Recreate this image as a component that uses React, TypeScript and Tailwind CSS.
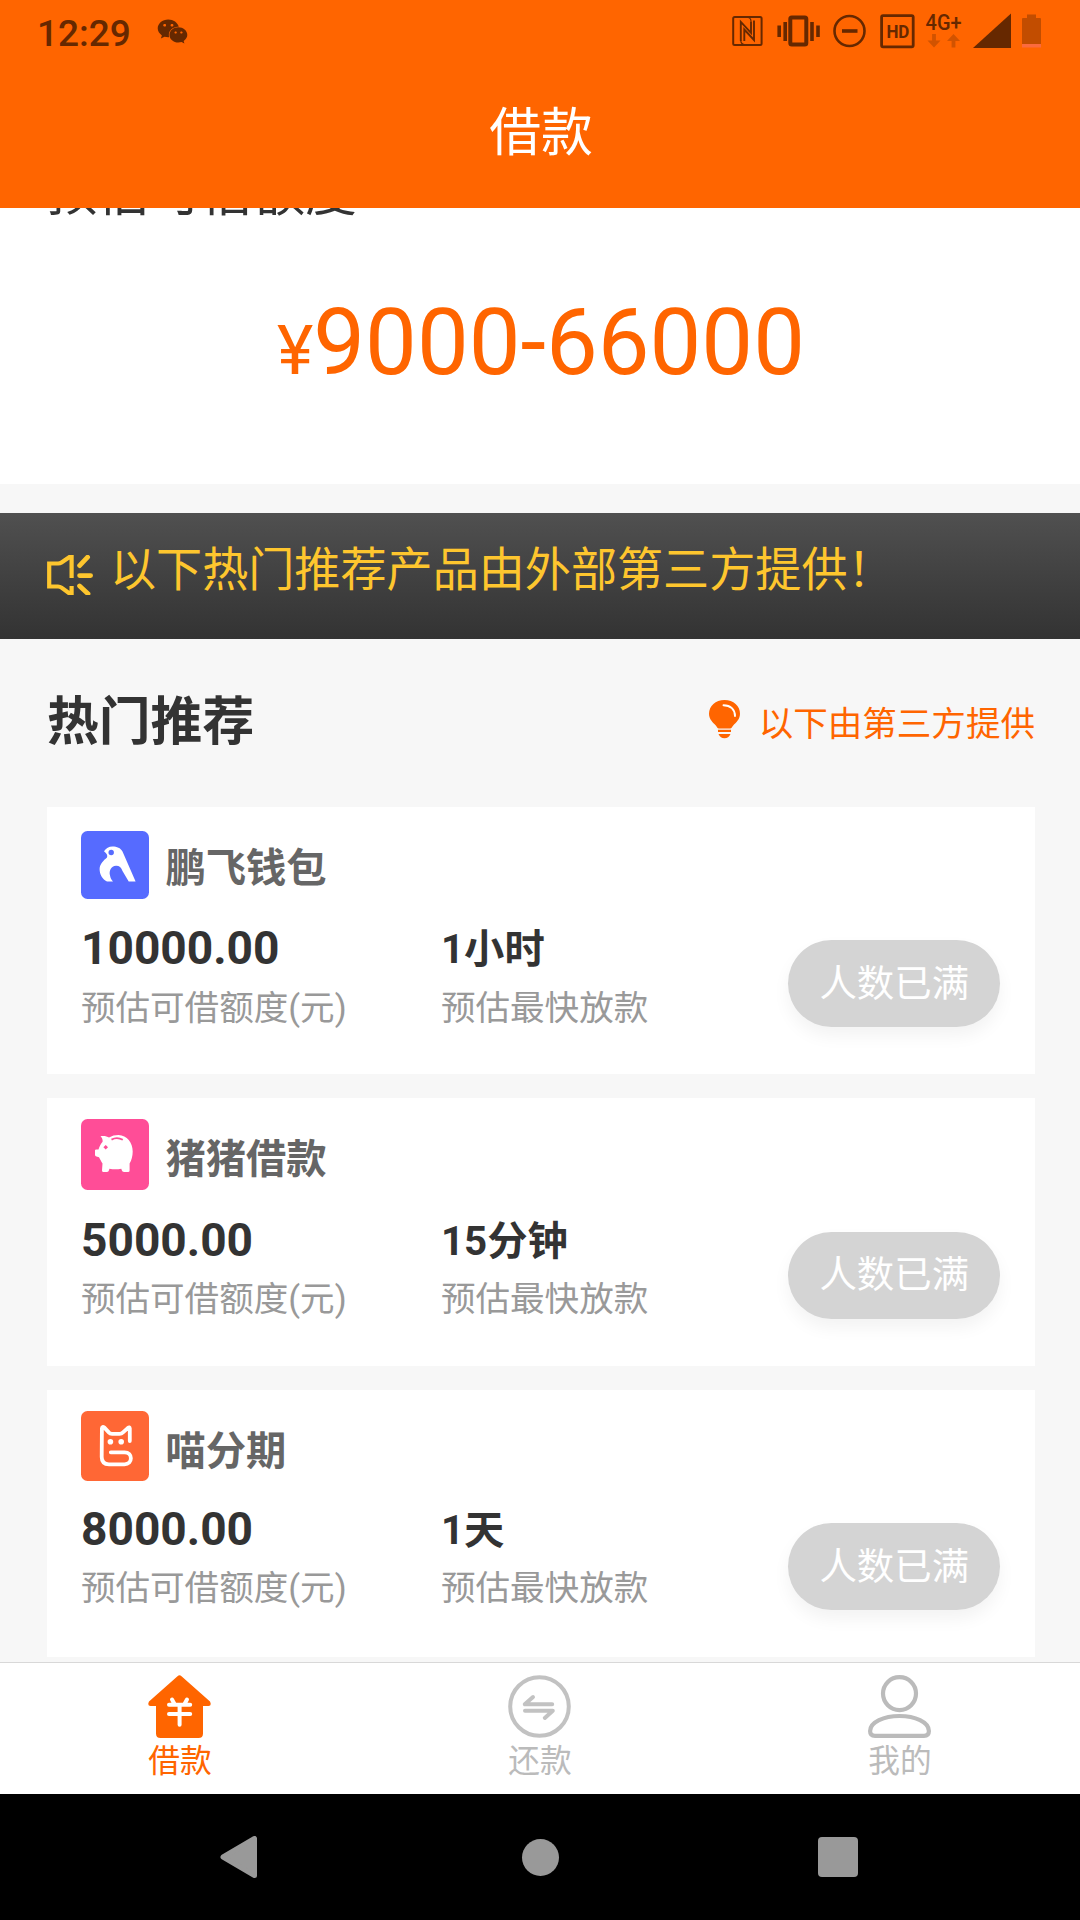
import type { ReactNode } from "react";
import { FaWeixin } from "react-icons/fa";

type Product = {
  name: string;
  amount: string;
  time: string;
  logo: ReactNode;
  /** Offsets of the logo row, the name beside it, the figures and their captions. */
  headClass: string;
  nameClass: string;
  bodyClass: string;
  captionClass: string;
};

function BirdLogo() {
  return (
    <svg viewBox="0 0 68 68" className="h-[68px] w-[68px] shrink-0">
      <rect width="68" height="68" rx="6.5" fill="#566bff" />
      <path
        d="M23 20.2C25 17 28 15.4 31.4 15.4C36 15.4 39.5 16.8 41.5 20.5L54.6 50.5H47.7L41.5 40C40.3 36.5 38 34.6 35 34.8C30 35.2 27.8 40 29 44.5C29.6 47.5 30.5 49 32 50.5H26C21 48 18.6 43 18.6 38C18.8 33 22.5 29.5 26 26.5C26.8 24.5 26 22.5 23 20.2Z"
        fill="#fff"
      />
      <circle cx="30.2" cy="21.5" r="2.7" fill="#566bff" />
    </svg>
  );
}

function PigLogo() {
  return (
    <svg viewBox="0 0 68 71" className="h-[71px] w-[68px] shrink-0">
      <rect width="68" height="71" rx="6.5" fill="#ff4d97" />
      <path
        d="M19.5 17.2C22.5 16.6 26 17 28 18.6C31 16.8 34 16 37.5 16C46 16.4 51.7 23.5 51.7 32.5C51.7 37 50.5 41.5 48.6 44.5V51.5Q48.6 53 47 53H43Q41.2 53 40.8 51.3L40.3 49.7Q34.5 50.8 28.4 49.7L28 51.3Q27.6 53 26 53H22.6Q21 53 21 51.5L21.5 44.5C20.2 42.5 19 40 18 38.3L15.5 37.6Q14 37.2 14 35.8V31.6Q14 30.6 15.2 30.6H17.5C18.3 27.5 19.6 25 21.6 22.7C21.8 20.6 21.2 18.6 19.5 17.2Z"
        fill="#fff"
      />
      <path d="M24.7 26L27 28.3L24.7 30.6L22.4 28.3Z" fill="#ff4d97" />
      <path d="M30.5 20.6Q36 17.6 41.8 20.8" fill="none" stroke="#ff4d97" strokeWidth="1.8" />
    </svg>
  );
}

function CatLogo() {
  return (
    <svg viewBox="0 0 68 70" className="h-[70px] w-[68px] shrink-0">
      <rect width="68" height="70" rx="6.5" fill="#ff6735" />
      <path
        d="M48.8 30V17.5Q48.6 15.6 47 16.8L42 21.4Q40.6 22.8 38.5 22.8H31Q29 22.8 27.8 21.4L23.4 16.6Q21.2 15 20.9 17.5L20.7 46Q20.8 53.3 28 53.3H43.5C52 53.3 52 41.3 43.5 41.3H29.8"
        fill="none"
        stroke="#fff"
        strokeWidth="3.8"
        strokeLinecap="round"
        strokeLinejoin="round"
      />
      <circle cx="29.4" cy="30.8" r="2.8" fill="#fff" />
      <circle cx="40.2" cy="30.8" r="2.8" fill="#fff" />
    </svg>
  );
}

const PRODUCTS: Product[] = [
  {
    name: "鹏飞钱包",
    amount: "10000.00",
    time: "1小时",
    logo: <BirdLogo />,
    headClass: "pt-[24px]",
    nameClass: "mt-[9px]",
    bodyClass: "pt-[112px]",
    captionClass: "mt-[7px]",
  },
  {
    name: "猪猪借款",
    amount: "5000.00",
    time: "15分钟",
    logo: <PigLogo />,
    headClass: "pt-[21px]",
    nameClass: "mt-[11px]",
    bodyClass: "pt-[113px]",
    captionClass: "mt-[6px]",
  },
  {
    name: "喵分期",
    amount: "8000.00",
    time: "1天",
    logo: <CatLogo />,
    headClass: "pt-[21px]",
    nameClass: "mt-[12px]",
    bodyClass: "pt-[110px]",
    captionClass: "mt-[6px]",
  },
];

function StatusBar() {
  return (
    <div className="flex h-[62px] items-start justify-between pl-[37px] pr-[39px] text-[#662800]">
      <div className="flex items-start">
        <span className="mt-[12px] w-[120px] text-[37px] font-medium leading-[44px]">12:29</span>
        <FaWeixin className="mt-[16px] h-[31px] w-[31px]" />
      </div>
      <svg viewBox="0 0 309 36" className="mt-[13px] h-[36px] w-[309px]" fill="none" stroke="currentColor">
        <rect x="1.2" y="4" width="28.4" height="28" rx="1.5" strokeWidth="2" />
        <path
          d="M8.8 28V8.8L19 19.8V8.5M22 7.5V27L12.3 16.5V28"
          strokeWidth="1.9"
        />
        <path d="M16 4.5Q19 5 19 8.5M12.3 31.5Q8.8 31 8.8 27.5" strokeWidth="1.2" />
        <rect x="58.3" y="4.5" width="16" height="27" rx="1.5" strokeWidth="4" />
        <path d="M47.2 12.5V24M53.2 9V28M80 9V28M86 12.5V24" strokeWidth="3.6" />
        <circle cx="117.5" cy="18" r="15" strokeWidth="2.6" />
        <path d="M110 18H125.5" strokeWidth="3.6" />
        <rect x="149.6" y="2.6" width="31.6" height="31.2" rx="1.5" strokeWidth="2.8" />
        <text
          x="154.4"
          y="25.4"
          fontSize="19"
          fontWeight="700"
          textLength="23"
          lengthAdjust="spacingAndGlyphs"
          fill="currentColor"
          stroke="none"
        >
          HD
        </text>
        <text
          x="193.6"
          y="16.6"
          fontSize="22.5"
          fontWeight="500"
          textLength="36"
          lengthAdjust="spacingAndGlyphs"
          fill="currentColor"
          stroke="none"
        >
          4G+
        </text>
        <path
          d="M200.1 21H203.9V27.5H208.5L202 34.5L195.5 27.5H200.1ZM219.6 34.5H223.4V28H228L221.5 21L215 28H219.6Z"
          fill="#d15300"
          stroke="none"
        />
        <path d="M241 35L279 .5V35Z" fill="currentColor" stroke="none" />
        <path d="M290 6Q290 5 291 5H295V1.5H304V5H308Q309 5 309 6V31H290Z" fill="#c24d00" stroke="none" />
        <rect x="290" y="31" width="19" height="3.5" fill="#fc6a3d" stroke="none" />
      </svg>
    </div>
  );
}

function ProductCard({ product }: { product: Product }) {
  const caption = `text-[34.56px] leading-[48px] text-[#999] ${product.captionClass}`;

  return (
    <div className="relative h-[267.5px] shrink-0 bg-white">
      <div className={`absolute left-[34.2px] top-0 flex items-center ${product.headClass}`}>
        {product.logo}
        <h3 className={`ml-4 text-[40.3px] font-bold leading-[48px] text-[#666] ${product.nameClass}`}>
          {product.name}
        </h3>
      </div>
      <div className={`flex px-[33.7px] ${product.bodyClass}`}>
        <div className="w-[360px]">
          <div className="text-[46.1px] font-bold leading-[58px] text-[#333]">{product.amount}</div>
          <div className={caption}>预估可借额度(元)</div>
        </div>
        <div className="flex-1">
          <div className="h-[58px] text-[40.3px] font-bold leading-[62px] text-[#333]">{product.time}</div>
          <div className={caption}>预估最快放款</div>
        </div>
      </div>
      <button
        type="button"
        className="absolute right-[34.5px] top-[133.5px] h-[87px] w-[212.5px] rounded-full bg-[#d4d4d4] pl-px text-[37.4px] leading-[86px] text-white shadow-[0_9px_17px_rgba(0,0,0,0.05)]"
      >
        人数已满
      </button>
    </div>
  );
}

function TabBar() {
  return (
    <div className="grid h-[132px] shrink-0 grid-cols-3 border-t border-[#d8d8d8] bg-white text-[31.7px] leading-[44px] text-[#bbb]">
      <div className="flex flex-col items-center pt-3 text-[#ff6500]">
        <svg viewBox="0 0 63 63" className="mr-px h-[63px] w-[63px]">
          <path
            d="M29.5 1.2Q31.5 -.6 33.5 1.2L62 26.5Q64 30.7 60.5 31H55V58.5Q55 63 50.5 63H12.5Q8 63 8 58.5V31H2.5Q-1 30.7 1 26.5Z"
            fill="currentColor"
          />
          <path
            d="M24 24.5L26.5 29M39 24.5L36.5 29M21 29.7H42.2M21 39H42.2M31.6 29.7V49.7"
            fill="none"
            stroke="#fff"
            strokeWidth="4"
            strokeLinecap="round"
          />
        </svg>
        <span className="mt-[2px]">借款</span>
      </div>
      <div className="flex flex-col items-center pt-3">
        <svg viewBox="0 0 63 63" className="mr-px h-[63px] w-[63px]" fill="none" stroke="#c2c2c2" strokeWidth="4">
          <circle cx="31.5" cy="31.5" r="29.3" />
          <path
            d="M25 22L16.8 29.3H44.2M17 35.8H44.8L36.8 43"
            strokeLinecap="round"
            strokeLinejoin="round"
          />
        </svg>
        <span className="mt-[2px]">还款</span>
      </div>
      <div className="flex flex-col items-center pt-3">
        <svg viewBox="0 0 63 63" className="mr-px h-[63px] w-[63px]" fill="none" stroke="currentColor" strokeWidth="4.2">
          <circle cx="31.5" cy="18.6" r="16.5" />
          <path d="M2.1 56C2.1 47 16 41 31.5 41S60.9 47 60.9 56Q60.9 60.9 56 60.9H7Q2.1 60.9 2.1 56Z" />
        </svg>
        <span className="mt-[2px]">我的</span>
      </div>
    </div>
  );
}

function NavBar() {
  return (
    <div className="flex h-[126px] shrink-0 items-center justify-between bg-black pl-[220px] pr-[222px]">
      <svg viewBox="0 0 37 42" className="h-[42px] w-[37px]">
        <path d="M3 21L34.5 2.5V39.5Z" fill="#999" stroke="#999" strokeWidth="5" strokeLinejoin="round" />
      </svg>
      <div className="ml-[5px] h-[37px] w-[37px] rounded-full bg-[#999]" />
      <div className="h-[40px] w-[40px] rounded-[4px] bg-[#999]" />
    </div>
  );
}

export default function App() {
  return (
    <div className="flex h-[1920px] w-[1080px] flex-col overflow-hidden bg-[#f7f7f7] font-['Roboto','Noto_Sans_CJK_SC',sans-serif]">
      <header className="h-[208px] shrink-0 bg-[#ff6500]">
        <StatusBar />
        <h1 className="mt-[34px] pl-[2px] text-center text-[51.8px] leading-[76px] text-white">借款</h1>
      </header>

      <main className="flex h-[1454px] shrink-0 flex-col overflow-hidden">
        {/* quota panel, scrolled partly under the header */}
        <section className="-mt-[60px] h-[336px] shrink-0 bg-white [clip-path:inset(60px_0_0_0)]">
          <h2 className="pl-[46px] pt-[8px] text-[51.8px] leading-[76px] text-[#333]">预估可借额度</h2>
          <div className="mt-[56px] pl-[2px] text-center leading-[110px] text-[#ff6500]">
            <span className="text-[69px]">¥</span>
            <span className="text-[92.16px]">9000-66000</span>
          </div>
        </section>

        <section className="mt-[29px] flex h-[125.5px] shrink-0 items-center bg-linear-to-b from-[#505050] to-[#333] pl-[47px] text-[#fec62e]">
          <svg viewBox="0 0 46 40" className="mb-[2px] h-[40px] w-[46px]" fill="none" stroke="currentColor">
            <path d="M24.6 23V2H22.5L14.5 7.5Q13 8.5 11 8.5H2.2V31.5H11Q13 31.5 14.5 32.6L22.5 38.5H24.6V31" strokeWidth="4.2" />
            <path d="M32.6 10.6L40.6 2.2M32.6 20.6H43.6M32.6 31L41 38.8" strokeWidth="4.8" strokeLinecap="round" />
          </svg>
          <p className="mb-[12px] ml-[17px] whitespace-nowrap text-[46.1px] leading-[60px]">
            以下热门推荐产品由外部第三方提供！
          </p>
        </section>

        <section className="flex h-[168px] shrink-0 items-start justify-between pl-[47px] pr-[45px]">
          <h2 className="mt-[46.5px] text-[51.8px] font-bold leading-[76px] text-[#333]">热门推荐</h2>
          <div className="flex items-start text-[#ff6500]">
            <svg viewBox="0 0 31 39" className="mt-[61px] h-[39px] w-[31px]">
              <path
                d="M15.5 0C24.5 0 31 6 31 13.8C31 19.5 27 22.5 24.2 25.5C23 27 22.8 28.4 21 28.4H10C8.2 28.4 8 27 6.8 25.5C4 22.5 0 19.5 0 13.8C0 6 6.5 0 15.5 0Z"
                fill="currentColor"
              />
              <path d="M14.5 5.2C21.5 5.2 26 9.5 26 16" fill="none" stroke="#fff" strokeWidth="1.9" strokeLinecap="round" />
              <path d="M9 29.8H22V32H9ZM9.5 34H21.5C20 37 18.5 38.2 15.5 38.2S11 37 9.5 34Z" fill="currentColor" />
            </svg>
            <span className="ml-[19px] mt-[61px] text-[34.56px] leading-[48px]">以下由第三方提供</span>
          </div>
        </section>

        <section className="flex shrink-0 flex-col gap-6 pl-[47.3px] pr-[45.5px]">
          {PRODUCTS.map((p) => (
            <ProductCard key={p.name} product={p} />
          ))}
        </section>
      </main>

      <TabBar />
      <NavBar />
    </div>
  );
}
